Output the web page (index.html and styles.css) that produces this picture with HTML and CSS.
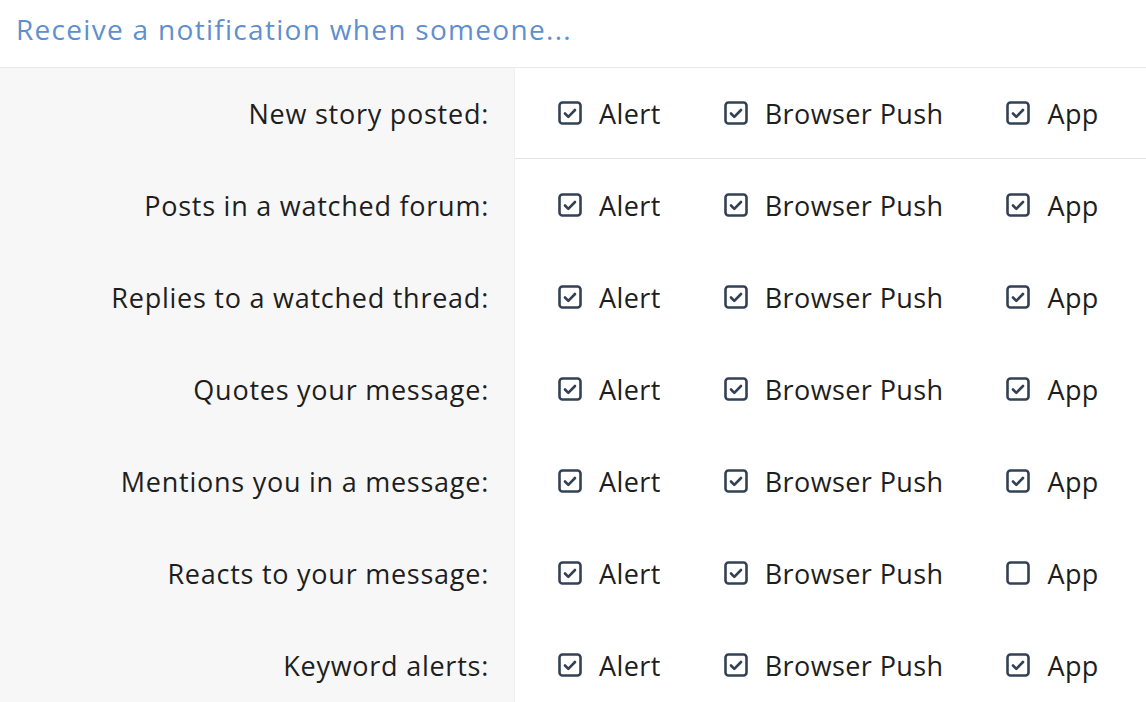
FILE: index.html
```html
<!DOCTYPE html>
<html lang="en">
  <head>
    <meta charset="UTF-8" />
    <title>Notification preferences</title>
    <link rel="stylesheet" href="styles.css">
  </head>
  <body>
    <div class="prefs">
      <h3 class="prefs-title">Receive a notification when someone...</h3>

      <div class="pref-row first">
        <div class="pref-label">New story posted:</div>
        <div class="pref-opts">
          <label class="opt"><svg class="box" viewBox="0 0 24 24"><rect x="1.5" y="1.5" width="21" height="21" rx="3"/><path d="M7 12.5l3.3 3.3L17 9"/></svg>Alert</label>
          <label class="opt"><svg class="box" viewBox="0 0 24 24"><rect x="1.5" y="1.5" width="21" height="21" rx="3"/><path d="M7 12.5l3.3 3.3L17 9"/></svg>Browser Push</label>
          <label class="opt"><svg class="box" viewBox="0 0 24 24"><rect x="1.5" y="1.5" width="21" height="21" rx="3"/><path d="M7 12.5l3.3 3.3L17 9"/></svg>App</label>
        </div>
      </div>

      <div class="pref-row">
        <div class="pref-label">Posts in a watched forum:</div>
        <div class="pref-opts">
          <label class="opt"><svg class="box" viewBox="0 0 24 24"><rect x="1.5" y="1.5" width="21" height="21" rx="3"/><path d="M7 12.5l3.3 3.3L17 9"/></svg>Alert</label>
          <label class="opt"><svg class="box" viewBox="0 0 24 24"><rect x="1.5" y="1.5" width="21" height="21" rx="3"/><path d="M7 12.5l3.3 3.3L17 9"/></svg>Browser Push</label>
          <label class="opt"><svg class="box" viewBox="0 0 24 24"><rect x="1.5" y="1.5" width="21" height="21" rx="3"/><path d="M7 12.5l3.3 3.3L17 9"/></svg>App</label>
        </div>
      </div>

      <div class="pref-row">
        <div class="pref-label">Replies to a watched thread:</div>
        <div class="pref-opts">
          <label class="opt"><svg class="box" viewBox="0 0 24 24"><rect x="1.5" y="1.5" width="21" height="21" rx="3"/><path d="M7 12.5l3.3 3.3L17 9"/></svg>Alert</label>
          <label class="opt"><svg class="box" viewBox="0 0 24 24"><rect x="1.5" y="1.5" width="21" height="21" rx="3"/><path d="M7 12.5l3.3 3.3L17 9"/></svg>Browser Push</label>
          <label class="opt"><svg class="box" viewBox="0 0 24 24"><rect x="1.5" y="1.5" width="21" height="21" rx="3"/><path d="M7 12.5l3.3 3.3L17 9"/></svg>App</label>
        </div>
      </div>

      <div class="pref-row">
        <div class="pref-label">Quotes your message:</div>
        <div class="pref-opts">
          <label class="opt"><svg class="box" viewBox="0 0 24 24"><rect x="1.5" y="1.5" width="21" height="21" rx="3"/><path d="M7 12.5l3.3 3.3L17 9"/></svg>Alert</label>
          <label class="opt"><svg class="box" viewBox="0 0 24 24"><rect x="1.5" y="1.5" width="21" height="21" rx="3"/><path d="M7 12.5l3.3 3.3L17 9"/></svg>Browser Push</label>
          <label class="opt"><svg class="box" viewBox="0 0 24 24"><rect x="1.5" y="1.5" width="21" height="21" rx="3"/><path d="M7 12.5l3.3 3.3L17 9"/></svg>App</label>
        </div>
      </div>

      <div class="pref-row">
        <div class="pref-label">Mentions you in a message:</div>
        <div class="pref-opts">
          <label class="opt"><svg class="box" viewBox="0 0 24 24"><rect x="1.5" y="1.5" width="21" height="21" rx="3"/><path d="M7 12.5l3.3 3.3L17 9"/></svg>Alert</label>
          <label class="opt"><svg class="box" viewBox="0 0 24 24"><rect x="1.5" y="1.5" width="21" height="21" rx="3"/><path d="M7 12.5l3.3 3.3L17 9"/></svg>Browser Push</label>
          <label class="opt"><svg class="box" viewBox="0 0 24 24"><rect x="1.5" y="1.5" width="21" height="21" rx="3"/><path d="M7 12.5l3.3 3.3L17 9"/></svg>App</label>
        </div>
      </div>

      <div class="pref-row">
        <div class="pref-label">Reacts to your message:</div>
        <div class="pref-opts">
          <label class="opt"><svg class="box" viewBox="0 0 24 24"><rect x="1.5" y="1.5" width="21" height="21" rx="3"/><path d="M7 12.5l3.3 3.3L17 9"/></svg>Alert</label>
          <label class="opt"><svg class="box" viewBox="0 0 24 24"><rect x="1.5" y="1.5" width="21" height="21" rx="3"/><path d="M7 12.5l3.3 3.3L17 9"/></svg>Browser Push</label>
          <label class="opt"><svg class="box" viewBox="0 0 24 24"><rect x="1.5" y="1.5" width="21" height="21" rx="3"/></svg>App</label>
        </div>
      </div>

      <div class="pref-row">
        <div class="pref-label">Keyword alerts:</div>
        <div class="pref-opts">
          <label class="opt"><svg class="box" viewBox="0 0 24 24"><rect x="1.5" y="1.5" width="21" height="21" rx="3"/><path d="M7 12.5l3.3 3.3L17 9"/></svg>Alert</label>
          <label class="opt"><svg class="box" viewBox="0 0 24 24"><rect x="1.5" y="1.5" width="21" height="21" rx="3"/><path d="M7 12.5l3.3 3.3L17 9"/></svg>Browser Push</label>
          <label class="opt"><svg class="box" viewBox="0 0 24 24"><rect x="1.5" y="1.5" width="21" height="21" rx="3"/><path d="M7 12.5l3.3 3.3L17 9"/></svg>App</label>
        </div>
      </div>
    </div>
  </body>
</html>
```

FILE: styles.css
```css
body {
  margin: 0;
  background: white;
  font-family: 'Open Sans', 'DejaVu Sans', sans-serif;
  color: #1e1e1e;
}

.prefs {
  width: 1146px;
}

.prefs-title {
  margin: 0;
  height: 68px;
  padding: 9px 16px 0;
  box-sizing: border-box;
  border-bottom: 1px solid #e9e9e9;
  font-size: 28px;
  letter-spacing: 1.3px;
  font-weight: 400;
  color: #5f8fcf;
  line-height: 40px;
}

.pref-row {
  display: flex;
  height: 92px;
}

.pref-row.first {
  height: 91px;
}

.pref-label {
  width: 515px;
  flex: none;
  box-sizing: border-box;
  padding-right: 25px;
  background: #f7f7f7;
  border-right: 1px solid #f1f1f1;
  display: flex;
  align-items: center;
  justify-content: flex-end;
  font-size: 27px;
  letter-spacing: 0.75px;
}

.pref-opts {
  flex: 1;
  display: flex;
  align-items: center;
  gap: 63px;
  padding-left: 43px;
}

.pref-row.first .pref-opts {
  border-bottom: 1px solid #e3e3e3;
}

.opt {
  display: flex;
  align-items: center;
  gap: 17px;
  font-size: 27px;
  letter-spacing: 0.4px;
}

.box {
  width: 24px;
  height: 24px;
  fill: none;
  stroke: #334155;
  stroke-width: 2.6;
  stroke-linecap: round;
  stroke-linejoin: round;
}
```
